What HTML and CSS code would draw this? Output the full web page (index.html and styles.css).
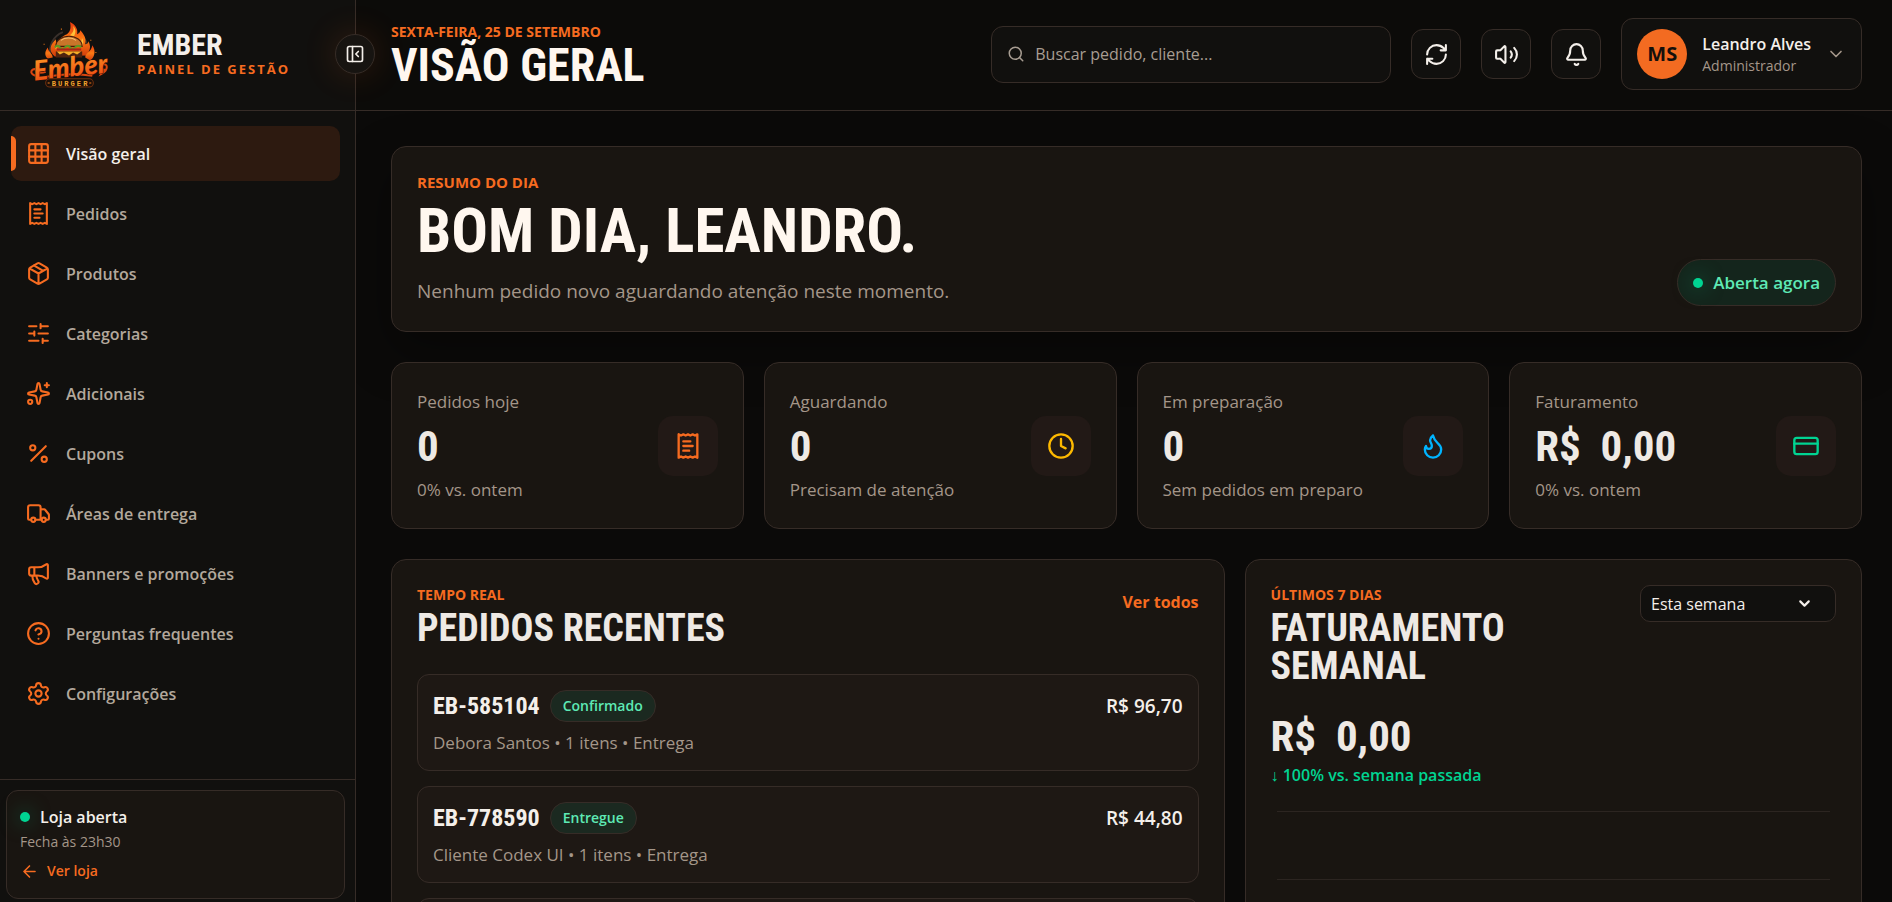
FILE: index.html
```
<!DOCTYPE html>
<html lang="pt-BR">
<head>
<meta charset="utf-8">
<meta name="viewport" content="width=device-width, initial-scale=1">
<title>Ember - Painel de gestão</title>
<link rel="stylesheet" href="styles.css">
</head>
<body>
<svg class="sprite" aria-hidden="true">
  <symbol id="receipt" viewBox="0 0 24 24"><path d="M4 2v20l2-1 2 1 2-1 2 1 2-1 2 1 2-1 2 1V2l-2 1-2-1-2 1-2-1-2 1-2-1-2 1ZM14 8H8M16 12H8M13 16H8"/></symbol>
</svg>
<div class="app">
  <aside class="sidebar">
    <div class="brand">
      <svg class="brand-logo" viewBox="0 0 80 66" role="img" aria-label="Ember Burger">
        <defs>
          <linearGradient id="fire" x1="0" y1="0" x2="0" y2="1"><stop offset="0" stop-color="#e8380c"/><stop offset=".5" stop-color="#fb7a14"/><stop offset="1" stop-color="#d33c0b"/></linearGradient>
          <linearGradient id="word" x1="0" y1="0" x2="0" y2="1"><stop offset="0" stop-color="#ffa127"/><stop offset="1" stop-color="#ea4410"/></linearGradient>
        </defs>
        <path d="M21 35A20 20 0 0 1 33 11M48 12A20 20 0 0 1 58 30" fill="none" stroke="#3a302b" stroke-width="2"/>
        <path d="M25 35C18 29 21 23 26 18c0 3 1 4 3 5 0-5 3-8 8-10 4-3 4-7 3-12 6 3 8 8 7 12 2-1 3-2 3-4 5 5 6 9 5 14 2 0 3-1 3-3 3 5 2 9-2 14Z" fill="url(#fire)"/>
        <path d="M55 36c0-5 6-5 7-12 4 6 2 12-2 15ZM18 37c-4-4-2-8 0-11 1 5 5 6 5 10Z" fill="url(#fire)"/>
        <path d="M40 14c4-3 4-6 3-9 4 4 2 8 1 10ZM29 19c-2 3-4 5-3 9 2-3 4-5 3-9ZM52 17c2 4 1 7-1 9-1-3 0-6 1-9Z" fill="#ffc13b"/>
        <path d="M26 25c0-6 6-10 13-10s13 4 13 10Z" fill="#c9752a" stroke="#4a1c08"/>
        <path d="M31 19c4-3 11-3 15 0" fill="none" stroke="#f6bd70" stroke-width="1"/>
        <path d="M25 26q3-3 5 0t5 0 5 0 5 0 6 0" fill="none" stroke="#5e9a22" stroke-width="2"/>
        <path d="M27 28h24" stroke="#a92718" stroke-width="2"/>
        <path d="M26 30h26v6H26Z" fill="#4e2310"/>
        <path d="M27 30h24l-4 3-4-2-4 3-5-3-4 2Z" fill="#f4ae28"/>
        <path d="M6 54c-7-3-4-7 1-7-3 4 4 5 9 3M71 43c7-2 7 5 0 9l3-5M12 56q27-6 50-2" fill="none" stroke="#d9440f" stroke-width="2"/>
        <text class="logo-word" x="4" y="55" transform="rotate(-6 38 48)">Ember</text>
        <rect x="16" y="57" width="47" height="8" rx="4" fill="#1a0f09" stroke="#70300f"/>
        <text class="logo-sub" x="22" y="64">BURGER</text>
        <path d="M18 61h2M59 61h2M14 23h1M31 8h1M60 19h1M65 31h1" stroke="#f07a18" stroke-width="1"/>
      </svg>
      <div>
        <div class="brand-name">EMBER</div>
        <div class="brand-sub">PAINEL DE GESTÃO</div>
      </div>
      <button class="collapse" type="button" aria-label="Recolher menu"><svg class="icon small" viewBox="0 0 24 24"><rect x="3" y="3" width="18" height="18" rx="2"/><path d="M9 3v18M16 15l-3-3 3-3"/></svg></button>
    </div>
    <nav class="nav">
      <a class="nav-link active" href="#"><svg class="icon" viewBox="0 0 24 24"><rect x="3" y="3" width="18" height="18" rx="2"/><path d="M3 9h18M3 15h18M9 3v18M15 3v18"/></svg>Visão geral</a>
      <a class="nav-link" href="#"><svg class="icon"><use href="#receipt"/></svg>Pedidos</a>
      <a class="nav-link" href="#"><svg class="icon" viewBox="0 0 24 24"><path d="M11 21.73a2 2 0 0 0 2 0l7-4A2 2 0 0 0 21 16V8a2 2 0 0 0-1-1.73l-7-4a2 2 0 0 0-2 0l-7 4A2 2 0 0 0 3 8v8a2 2 0 0 0 1 1.73zM12 22V12M3.29 7 12 12l8.71-5M7.5 4.27l9 5.15"/></svg>Produtos</a>
      <a class="nav-link" href="#"><svg class="icon" viewBox="0 0 24 24"><path d="M10 5H3M12 19H3M14 3v4M16 17v4M21 12h-9M21 19h-5M21 5h-7M8 10v4M8 12H3"/></svg>Categorias</a>
      <a class="nav-link" href="#"><svg class="icon" viewBox="0 0 24 24"><path d="M11.017 2.814a1 1 0 0 1 1.966 0l1.051 5.558a2 2 0 0 0 1.594 1.594l5.558 1.051a1 1 0 0 1 0 1.966l-5.558 1.051a2 2 0 0 0-1.594 1.594l-1.051 5.558a1 1 0 0 1-1.966 0l-1.051-5.558a2 2 0 0 0-1.594-1.594l-5.558-1.051a1 1 0 0 1 0-1.966l5.558-1.051a2 2 0 0 0 1.594-1.594zM20 2v4M22 4h-4"/><circle cx="4" cy="20" r="2"/></svg>Adicionais</a>
      <a class="nav-link" href="#"><svg class="icon" viewBox="0 0 24 24"><path d="M19 5 5 19"/><circle cx="6.5" cy="6.5" r="2.5"/><circle cx="17.5" cy="17.5" r="2.5"/></svg>Cupons</a>
      <a class="nav-link" href="#"><svg class="icon" viewBox="0 0 24 24"><path d="M14 18V6a2 2 0 0 0-2-2H4a2 2 0 0 0-2 2v11a1 1 0 0 0 1 1h2M15 18H9M19 18h2a1 1 0 0 0 1-1v-3.65a1 1 0 0 0-.22-.624l-3.48-4.35A1 1 0 0 0 17.52 8H14"/><circle cx="17" cy="18" r="2"/><circle cx="7" cy="18" r="2"/></svg>Áreas de entrega</a>
      <a class="nav-link" href="#"><svg class="icon" viewBox="0 0 24 24"><path d="M11 6a13 13 0 0 0 8.4-2.8A1 1 0 0 1 21 4v12a1 1 0 0 1-1.6.8A13 13 0 0 0 11 14H5a2 2 0 0 1-2-2V8a2 2 0 0 1 2-2zM6 14a12 12 0 0 0 2.4 7.2 2 2 0 0 0 3.2-2.4A8 8 0 0 1 10 14M8 6v8"/></svg>Banners e promoções</a>
      <a class="nav-link" href="#"><svg class="icon" viewBox="0 0 24 24"><circle cx="12" cy="12" r="10"/><path d="M9.09 9a3 3 0 0 1 5.83 1c0 2-3 3-3 3M12 17h.01"/></svg>Perguntas frequentes</a>
      <a class="nav-link" href="#"><svg class="icon" viewBox="0 0 24 24"><path d="M9.671 4.136a2.34 2.34 0 0 1 4.659 0 2.34 2.34 0 0 0 3.319 1.915 2.34 2.34 0 0 1 2.33 4.033 2.34 2.34 0 0 0 0 3.831 2.34 2.34 0 0 1-2.33 4.033 2.34 2.34 0 0 0-3.319 1.915 2.34 2.34 0 0 1-4.659 0 2.34 2.34 0 0 0-3.32-1.915 2.34 2.34 0 0 1-2.33-4.033 2.34 2.34 0 0 0 0-3.831A2.34 2.34 0 0 1 6.35 6.051a2.34 2.34 0 0 0 3.319-1.915"/><circle cx="12" cy="12" r="3"/></svg>Configurações</a>
    </nav>
    <div class="side-foot">
      <div class="store">
        <div class="store-status"><span class="dot"></span>Loja aberta</div>
        <div class="store-hours">Fecha às 23h30</div>
        <a class="store-link" href="#"><svg class="icon small" viewBox="0 0 24 24"><path d="m12 19-7-7 7-7M19 12H5"/></svg>Ver loja</a>
      </div>
    </div>
  </aside>

  <div class="page">
    <header class="topbar">
      <div class="heading">
        <div class="date">SEXTA-FEIRA, 25 DE SETEMBRO</div>
        <h1 class="page-title">VISÃO GERAL</h1>
      </div>
      <label class="search">
        <svg class="icon small" viewBox="0 0 24 24"><path d="m21 21-4.34-4.34"/><circle cx="11" cy="11" r="8"/></svg>
        <input type="search" placeholder="Buscar pedido, cliente..." aria-label="Buscar pedido, cliente">
      </label>
      <button class="tool" type="button" aria-label="Atualizar"><svg class="icon" viewBox="0 0 24 24"><path d="M3 12a9 9 0 0 1 9-9 9.75 9.75 0 0 1 6.74 2.74L21 8M21 3v5h-5M21 12a9 9 0 0 1-9 9 9.75 9.75 0 0 1-6.74-2.74L3 16M8 16H3v5"/></svg></button>
      <button class="tool" type="button" aria-label="Som"><svg class="icon" viewBox="0 0 24 24"><path d="M11 4.702a.705.705 0 0 0-1.203-.498L6.413 7.587A1.4 1.4 0 0 1 5.416 8H3a1 1 0 0 0-1 1v6a1 1 0 0 0 1 1h2.416a1.4 1.4 0 0 1 .997.413l3.383 3.384A.705.705 0 0 0 11 19.298zM16 9a5 5 0 0 1 0 6M19.364 18.364a9 9 0 0 0 0-12.728"/></svg></button>
      <button class="tool" type="button" aria-label="Notificações"><svg class="icon" viewBox="0 0 24 24"><path d="M10.268 21a2 2 0 0 0 3.464 0M3.262 15.326A1 1 0 0 0 4 17h16a1 1 0 0 0 .74-1.673C19.41 13.956 18 12.499 18 8A6 6 0 0 0 6 8c0 4.499-1.411 5.956-2.738 7.326"/></svg></button>
      <button class="user" type="button">
        <span class="avatar">MS</span>
        <span class="user-text"><span class="user-name">Leandro Alves</span><span class="user-role">Administrador</span></span>
        <svg class="icon small" viewBox="0 0 24 24"><path d="m6 9 6 6 6-6"/></svg>
      </button>
    </header>

    <main class="content">
      <section class="card hero">
        <div>
          <div class="eyebrow large">RESUMO DO DIA</div>
          <h2 class="hero-title">BOM DIA, LEANDRO.</h2>
          <p class="hero-text">Nenhum pedido novo aguardando atenção neste momento.</p>
        </div>
        <span class="open-pill"><span class="dot"></span>Aberta agora</span>
      </section>

      <section class="stats">
        <article class="card stat">
          <div><div class="stat-label">Pedidos hoje</div><div class="value">0</div><div class="stat-label">0% vs. ontem</div></div>
          <span class="stat-icon orange"><svg class="icon big"><use href="#receipt"/></svg></span>
        </article>
        <article class="card stat">
          <div><div class="stat-label">Aguardando</div><div class="value">0</div><div class="stat-label">Precisam de atenção</div></div>
          <span class="stat-icon yellow"><svg class="icon big" viewBox="0 0 24 24"><circle cx="12" cy="12" r="10"/><path d="M12 6v6l4 2"/></svg></span>
        </article>
        <article class="card stat">
          <div><div class="stat-label">Em preparação</div><div class="value">0</div><div class="stat-label">Sem pedidos em preparo</div></div>
          <span class="stat-icon blue"><svg class="icon big" viewBox="0 0 24 24"><path d="M12 3q1 4 4 6.500t3 5.500a1 1 0 0 1-14 0 5 5 0 0 1 1-3 1 1 0 0 0 5 0c0-2-1.500-3-1.500-5q0-2 2.500-4"/></svg></span>
        </article>
        <article class="card stat">
          <div><div class="stat-label">Faturamento</div><div class="value">R$&nbsp;&nbsp;0,00</div><div class="stat-label">0% vs. ontem</div></div>
          <span class="stat-icon green"><svg class="icon big" viewBox="0 0 24 24"><rect x="2" y="5" width="20" height="14" rx="2"/><path d="M2 10h20"/></svg></span>
        </article>
      </section>

      <div class="panels">
        <section class="card panel">
          <div class="panel-head">
            <div><div class="eyebrow">TEMPO REAL</div><h2 class="panel-title">PEDIDOS RECENTES</h2></div>
            <a class="see-all" href="#">Ver todos</a>
          </div>
          <div class="orders">
            <article class="order">
              <div><div class="order-top"><strong class="order-id">EB-585104</strong><span class="badge">Confirmado</span></div><div class="order-info">Debora Santos • 1 itens • Entrega</div></div>
              <span class="price">R$ 96,70</span>
            </article>
            <article class="order">
              <div><div class="order-top"><strong class="order-id">EB-778590</strong><span class="badge">Entregue</span></div><div class="order-info">Cliente Codex UI • 1 itens • Entrega</div></div>
              <span class="price">R$ 44,80</span>
            </article>
            <article class="order placeholder"></article>
          </div>
        </section>
        <section class="card panel">
          <div class="panel-head">
            <div><div class="eyebrow">ÚLTIMOS 7 DIAS</div><h2 class="panel-title">FATURAMENTO SEMANAL</h2></div>
            <div class="period">
              <select aria-label="Período"><option>Esta semana</option></select>
              <svg class="icon caret" viewBox="0 0 24 24"><path d="m6 9 6 6 6-6"/></svg>
            </div>
          </div>
          <div class="value">R$&nbsp;&nbsp;0,00</div>
          <div class="trend">↓ 100% vs. semana passada</div>
          <div class="chart"><div class="grid-line"></div><div class="grid-line"></div></div>
        </section>
      </div>
    </main>
  </div>
</div>
</body>
</html>
```
FILE: styles.css
```
:root {
  --orange: #f66b20;
  --line: #362c27;
  --card: #191511;
  --side: #11100e;
  --muted: #a49689;
  --text: #f4efea;
  --green: #00d492;
  --condensed: "Roboto Condensed", Roboto, "Liberation Sans", sans-serif;
}
* { box-sizing: border-box; }
body {
  margin: 0;
  background: #0b0a09;
  color: var(--text);
  font-family: "Open Sans", "Noto Sans", sans-serif;
  font-size: 16px;
  line-height: 24px;
}
h1, h2, p { margin: 0; }
a { color: inherit; text-decoration: none; }
button, input, select { font: inherit; color: inherit; }
.sprite { display: none; }
.icon {
  width: 25px;
  height: 25px;
  flex: none;
  fill: none;
  stroke: currentColor;
  stroke-width: 2;
  stroke-linecap: round;
  stroke-linejoin: round;
}
.icon.small { width: 20px; height: 20px; }
.icon.big { width: 28px; height: 28px; }
.dot {
  width: 10px;
  height: 10px;
  border-radius: 50%;
  background: var(--green);
  box-shadow: 0 0 20px rgba(0, 212, 146, .5);
}

.app { display: flex; height: 100vh; overflow: hidden; }

/* sidebar */
.sidebar {
  position: relative;
  z-index: 1;
  display: flex;
  flex-direction: column;
  flex: none;
  width: 356px;
  background: var(--side);
  border-right: 1px solid var(--line);
}
.brand {
  position: relative;
  display: flex;
  align-items: center;
  flex: none;
  gap: 26px;
  height: 111px;
  padding: 0 0 2px 29px;
  border-bottom: 1px solid var(--line);
}
.brand-logo { width: 82px; height: 67px; }
.logo-word { font: italic 900 27px Lato, sans-serif; fill: url(#word); stroke: #2a0d04; stroke-width: 1px; paint-order: stroke; }
.logo-sub { font: 700 7px "Liberation Mono", monospace; letter-spacing: 2px; fill: #f0a12c; }
.brand-name { font: 700 30px/30px var(--condensed); }
.brand-sub { color: var(--orange); font-size: 13px; font-weight: 700; line-height: 18px; letter-spacing: 2px; }
.collapse {
  position: absolute;
  top: 34px;
  right: -20px;
  display: grid;
  place-items: center;
  width: 40px;
  height: 40px;
  padding: 0;
  background: #171411;
  border: 1px solid var(--line);
  border-radius: 50%;
  box-shadow: 0 0 35px rgba(246, 107, 32, .16);
}
.nav { display: flex; flex-direction: column; gap: 5px; padding: 15px 15px 0 11px; }
.nav-link {
  position: relative;
  display: flex;
  align-items: center;
  gap: 15px;
  height: 55px;
  padding-left: 15px;
  border-radius: 10px;
  overflow: hidden;
  color: #b3a89c;
  font-weight: 600;
}
.nav-link .icon { color: var(--orange); }
.nav-link.active { background: #2d1a10; color: var(--text); }
.nav-link.active::before {
  content: "";
  position: absolute;
  left: 0;
  top: 10px;
  width: 5px;
  height: 35px;
  border-radius: 0 5px 5px 0;
  background: var(--orange);
}
.side-foot { margin-top: auto; padding: 10px 10px 3px 6px; border-top: 1px solid var(--line); }
.store { padding: 14px 13px 15px; background: var(--card); border: 1px solid var(--line); border-radius: 12px; }
.store-status { display: flex; align-items: center; gap: 10px; font-weight: 600; }
.store-hours { color: var(--muted); font-size: 14px; line-height: 26px; }
.store-link { display: flex; align-items: center; gap: 8px; padding-top: 4px; color: var(--orange); font-size: 14px; font-weight: 600; }
.store-link .icon { width: 19px; height: 19px; }

/* top bar */
.page { display: flex; flex-direction: column; flex: 1; min-width: 0; }
.topbar {
  display: flex;
  align-items: center;
  flex: none;
  gap: 20px;
  height: 111px;
  padding: 0 30px 2px 35px;
  background: #0c0b09;
  border-bottom: 1px solid var(--line);
}
.heading { flex: 1; padding-top: 4px; }
.date { color: var(--orange); font-size: 14px; font-weight: 700; line-height: 18px; }
.page-title { color: #fff7ef; font: 700 46px/48px var(--condensed); }
.search {
  display: flex;
  align-items: center;
  gap: 10px;
  width: 400px;
  height: 57px;
  padding: 0 15px;
  background: var(--side);
  border: 1px solid var(--line);
  border-radius: 12px;
  color: #a89d92;
}
.search .icon { width: 18px; height: 18px; }
.search input { flex: 1; min-width: 0; padding: 0; background: none; border: 0; outline: 0; }
.search input::placeholder { color: #a89d92; opacity: 1; }
.tool {
  display: grid;
  place-items: center;
  width: 50px;
  height: 50px;
  padding: 0;
  background: var(--side);
  border: 1px solid var(--line);
  border-radius: 12px;
}
.user {
  display: flex;
  align-items: center;
  gap: 15px;
  height: 72px;
  padding: 0 15px;
  background: var(--side);
  border: 1px solid var(--line);
  border-radius: 12px;
  text-align: left;
}
.user .icon { color: var(--muted); }
.avatar {
  display: grid;
  place-items: center;
  width: 50px;
  height: 50px;
  border-radius: 50%;
  background: #f36b21;
  color: #15100c;
  font-size: 20px;
  font-weight: 700;
}
.user-text { display: grid; padding-top: 2px; }
.user-name { font-weight: 600; line-height: 22px; }
.user-role { color: var(--muted); font-size: 14px; line-height: 22px; }

/* content */
.content {
  display: flex;
  flex-direction: column;
  flex: 1;
  gap: 30px;
  min-height: 0;
  padding: 35px 30px 35px 35px;
  overflow-y: auto;
  scrollbar-width: none;
}
.content > * { flex: none; }
.card { background: var(--card); border: 1px solid var(--line); border-radius: 15px; }
.eyebrow { color: var(--orange); font-size: 14px; font-weight: 700; line-height: 20px; }
.eyebrow.large { font-size: 15px; }
.hero {
  display: flex;
  align-items: flex-end;
  justify-content: space-between;
  padding: 25px;
  box-shadow: 0 20px 50px rgba(0, 0, 0, .35);
}
.hero-title { padding: 7px 0 13px; color: #fff7ef; font: 700 61px/64px var(--condensed); }
.hero-text { color: var(--muted); font-size: 19px; line-height: 30px; }
.open-pill {
  display: flex;
  align-items: center;
  gap: 10px;
  height: 47px;
  padding: 0 15px;
  background: #14251c;
  border: 1px solid var(--line);
  border-radius: 24px;
  color: #5ee9b5;
  font-size: 17px;
  font-weight: 600;
}
.stats { display: grid; grid-template-columns: repeat(4, minmax(0, 1fr)); gap: 20px; }
.stat { display: flex; align-items: center; justify-content: space-between; padding: 25px 25px 24px; }
.stat-label { color: var(--muted); font-size: 17px; line-height: 28px; }
.value { color: #eee9e4; font: 700 43px/60px var(--condensed); }
.stat-icon { display: grid; place-items: center; width: 60px; height: 60px; border-radius: 15px; background: #221916; }
.orange { color: var(--orange); }
.yellow { color: #fdb900; }
.blue { color: #00b4ff; }
.green { color: var(--green); }

.panels { display: grid; grid-template-columns: minmax(0, 135fr) minmax(0, 100fr); gap: 20px; }
.panel { padding: 25px; }
.panel-head { display: flex; justify-content: space-between; padding-bottom: 21px; }
.panel-title { max-width: 300px; padding-top: 4px; color: #eee9e4; font: 700 38px/38px var(--condensed); }
.panel:first-child .panel-title { max-width: none; }
.see-all { padding-top: 5px; color: var(--orange); font-weight: 700; }
.orders { display: grid; gap: 15px; padding-top: 6px; }
.order {
  display: flex;
  justify-content: space-between;
  padding: 15px;
  background: #1e1814;
  border: 1px solid var(--line);
  border-radius: 12px;
}
.order.placeholder { height: 97px; }
.order-top { display: flex; align-items: center; gap: 10px; }
.order-id { font: 700 24px/32px var(--condensed); }
.badge {
  padding: 0 12px;
  background: #1b2920;
  border: 1px solid var(--line);
  border-radius: 16px;
  color: #5ee9b5;
  font-size: 14px;
  font-weight: 600;
  line-height: 30px;
}
.order-info { padding-top: 9px; color: var(--muted); font-size: 17px; }
.price { padding-top: 4px; font-size: 19px; font-weight: 600; }
.period { position: relative; align-self: flex-start; width: 196px; }
.period select {
  width: 100%;
  height: 37px;
  padding: 0 10px;
  background: var(--side);
  border: 1px solid var(--line);
  border-radius: 10px;
  appearance: none;
}
.caret { position: absolute; right: 23px; top: 10px; width: 17px; height: 17px; stroke-width: 3; pointer-events: none; }
.trend { color: var(--green); font-weight: 600; line-height: 18px; }
.chart { display: grid; gap: 67px; padding: 27px 6px 60px; }
.grid-line { height: 1px; background: #2c2521; }
```
